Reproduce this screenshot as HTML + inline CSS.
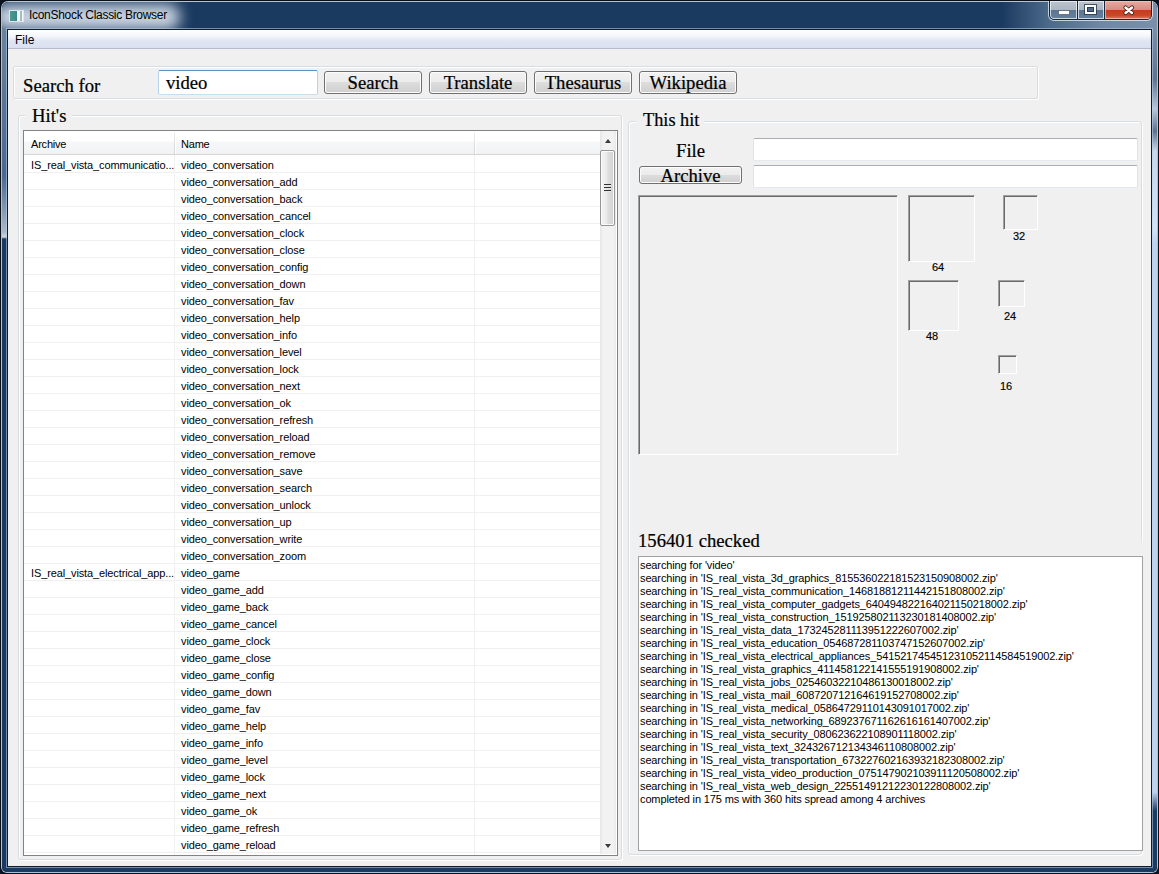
<!DOCTYPE html>
<html><head><meta charset="utf-8"><title>IconShock Classic Browser</title>
<style>
html,body{margin:0;padding:0;width:1159px;height:874px;overflow:hidden;background:#0b1420;}
*{box-sizing:border-box;}
.a{position:absolute;}
#win{position:absolute;left:0;top:0;width:1159px;height:874px;border-radius:8px 8px 7px 7px;background:#0a0f18;overflow:hidden;}
#win2{position:absolute;left:1px;top:1px;width:1157px;height:872px;border-radius:7px 7px 6px 6px;background:#1b3a60;border:1px solid #a9c0de;border-top-color:#b4c6d4;overflow:hidden;}
#tbar{position:absolute;left:0;top:0;width:1155px;height:28px;background:linear-gradient(90deg,#1b3a60 0px,#1b3a60 1000px,#4a6888 1045px,#7088a4 1100px,#7a90aa 1155px);}
#glow{position:absolute;left:-8px;top:2px;width:186px;height:26px;border-radius:12px;background:rgba(208,217,229,.97);filter:blur(7px);}
#ttl{position:absolute;left:27px;top:6px;font:12px "Liberation Sans",sans-serif;color:#000;white-space:nowrap;letter-spacing:-0.3px}
#ico{position:absolute;left:7px;top:8px;width:15px;height:12px;background:linear-gradient(90deg,#4b9a8c 0,#3a8a8a 7px,#f4f8f8 7px,#f4f8f8 10px,#a8bcc0 10px,#a8bcc0 12px,#f4f8f8 12px);border:1px solid #dfe6ea;}
#lfr{position:absolute;left:0;top:27px;width:6px;height:845px;background:linear-gradient(180deg,#6a84a0 0px,#5a7494 75px,#4a6890 147px,#a8b8c8 203px,#d0d8e0 208px,#1b3a60 210px,#1b3a60 845px);}
#rfr{position:absolute;left:1150px;top:27px;width:6px;height:845px;background:linear-gradient(180deg,#7890a8 0px,#5c7490 50px,#b8c8da 80px,#5a7290 102px,#c8d8ea 122px,#d0e4f8 200px,#bcd4f0 215px,#bcd4f0 763px,#1b3a60 782px);}
#bfr{position:absolute;left:0;top:865px;width:1155px;height:7px;background:#1b3a60;}
#client{position:absolute;left:6px;top:28px;width:1147px;height:840px;border:1px solid rgba(190,210,235,.55);}
#client2{position:absolute;left:7px;top:29px;width:1145px;height:838px;border:1px solid #101c2c;background:#f0f0f0;}
#menu{position:absolute;left:8px;top:30px;width:1143px;height:19px;background:linear-gradient(180deg,#ffffff 0%,#f4f6fb 35%,#dfe5f2 60%,#d9e0f1 100%);border-bottom:1px solid #b6bccc;}
#mfile{position:absolute;left:15px;top:33px;font:12px "Liberation Sans",sans-serif;color:#000;}
/* caption buttons */
#cap{position:absolute;left:1048px;top:1px;width:105px;height:20px;border:1px solid rgba(225,235,245,.8);border-top:none;border-radius:0 0 6px 6px;overflow:hidden;}
#cap2{position:absolute;left:0;top:0;width:103px;height:19px;border:1px solid #1a2638;border-top:none;border-radius:0 0 5px 5px;overflow:hidden;background:#1a2638;}
#bmin{position:absolute;left:0;top:0;width:27px;height:18px;background:linear-gradient(180deg,#bcc4ce 0,#a9b5c2 50%,#5c7593 52%,#6580a0 100%);box-shadow:inset 0 0 0 1px rgba(240,245,250,.75);border-bottom-left-radius:4px;}
#bmax{position:absolute;left:28px;top:0;width:26px;height:18px;background:linear-gradient(180deg,#bcc4ce 0,#a9b5c2 50%,#5c7593 52%,#6580a0 100%);box-shadow:inset 0 0 0 1px rgba(240,245,250,.75);}
#bcls{position:absolute;left:55px;top:0;width:48px;height:18px;background:linear-gradient(180deg,#e6aba2 0,#d88a7e 50%,#c63a1e 52%,#d04428 80%,#e07a66 100%);box-shadow:inset 0 0 0 1px rgba(250,200,190,.7);border-bottom-right-radius:4px;}
.serif{font-family:"Liberation Serif",serif;color:#000;white-space:nowrap;-webkit-text-stroke:0.22px #000;}
.sans{font-family:"Liberation Sans",sans-serif;color:#000;white-space:nowrap;}
.grp{position:absolute;border:1px solid #d8dde2;border-radius:3px;box-shadow:inset 1px 1px 0 #fff, 1px 1px 0 #fff;}
.btn{position:absolute;border:1px solid #707070;border-radius:3px;background:linear-gradient(180deg,#f2f2f2 0%,#ebebeb 50%,#dddddd 50%,#cfcfcf 100%);box-shadow:inset 0 0 0 1px #fcfcfc;text-align:center;font-family:"Liberation Serif",serif;color:#000;white-space:nowrap;-webkit-text-stroke:0.22px #000;}
.tb{position:absolute;background:#fff;border:1px solid;border-color:#abadb3 #e2e3ea #e3e9ef #e2e3ea;border-radius:2px;}
.sunk{position:absolute;border:1px solid;border-color:#a0a0a0 #fff #fff #a0a0a0;box-shadow:inset 1px 1px 0 #696969;}
#tbl{position:absolute;left:23px;top:130px;width:595px;height:726px;border:1px solid #838383;background:#fff;overflow:hidden;}
#hdr{position:absolute;left:0;top:0;width:577px;height:24px;background:linear-gradient(180deg,#ffffff 0%,#ffffff 42%,#f6f7f9 50%,#f1f2f4 100%);border-bottom:1px solid #d5d5d5;}
.hs{position:absolute;top:1px;width:1px;height:22px;background:linear-gradient(180deg,#f0f0f0 0%,#dcdcdc 60%,#d3d3d3 100%);box-shadow:1px 0 0 #fff;}
.row{position:absolute;left:0;width:577px;height:17px;border-bottom:1px solid #f0f0f0;font:11px "Liberation Sans",sans-serif;letter-spacing:-0.12px;color:#000;}
.row span{position:absolute;top:3px;white-space:nowrap;}
.c1{left:7px;}
.c2{left:157px;}
.vg{position:absolute;top:24px;width:1px;height:700px;background:#f0f0f0;}
#sb{position:absolute;left:576px;top:0;width:16px;height:723px;background:linear-gradient(90deg,#e6e6e6 0,#f2f2f2 20%,#f2f2f2 80%,#e9e9e9 100%);}
#thumb{position:absolute;left:0px;top:19px;width:15px;height:76px;border:1px solid #959595;border-radius:2px;background:linear-gradient(90deg,#f4f4f4 0,#ececec 40%,#dedede 55%,#d2d2d2 100%);box-shadow:inset 0 0 0 1px #fbfbfb;}
.grip{position:absolute;left:3px;width:7px;height:2px;background:linear-gradient(180deg,#303030 50%,#e8e8e8 50%);}
.arr{position:absolute;width:0;height:0;border-left:4px solid transparent;border-right:4px solid transparent;}
#log{position:absolute;left:638px;top:556px;width:505px;height:295px;border:1px solid #a2a2a2;background:#fff;overflow:hidden;}
.ll{font:11px/13px "Liberation Sans",sans-serif;letter-spacing:-0.125px;color:#000;white-space:nowrap;}
.lbl{position:absolute;font:11px "Liberation Sans",sans-serif;color:#000;-webkit-text-stroke:0.15px #000;}

</style></head><body>
<div id="win"><div id="win2">
 <div id="tbar"><div id="glow"></div><div id="ico"></div><div id="ttl">IconShock Classic Browser</div></div>
 <div id="lfr"></div><div id="rfr"></div><div id="bfr"></div>
</div></div>
<div id="cap"><div id="cap2">
  <div id="bmin"><div class="a" style="left:8px;top:9px;width:12px;height:5px;background:#fff;border:1px solid rgba(40,55,75,.7);"></div></div>
  <div id="bmax"><div class="a" style="left:7px;top:4px;width:11px;height:9px;border:2px solid #fff;outline:1px solid rgba(40,55,75,.8);box-shadow:inset 0 0 0 1px #2a3a50;background:#50688a;"></div></div>
  <div id="bcls"><svg class="a" style="left:0;top:0" width="48" height="18"><path d="M20.5 6.5 L27 12 M27 6.5 L20.5 12" stroke="#4a2018" stroke-width="4.2" stroke-linecap="round"/><path d="M20.5 6.5 L27 12 M27 6.5 L20.5 12" stroke="#fff" stroke-width="2.4" stroke-linecap="round"/></svg></div>
</div></div>
<div id="client"></div><div id="client2"></div>
<div id="menu"></div>
<div id="mfile">File</div>

<!-- search group -->
<div class="grp" style="left:13px;top:66px;width:1025px;height:33px;border-radius:2px;"></div>
<div class="a serif" style="left:23px;top:75px;font-size:18.67px;">Search for</div>
<div class="tb" style="left:158px;top:70px;width:160px;height:25px;border-color:#5d8fc5 #b7d3ea #c5def0 #b7d3ea;"></div>
<div class="a serif" style="left:166px;top:72px;font-size:18.67px;">video</div>
<div class="btn" style="left:324px;top:71px;width:98px;height:23px;font-size:18.67px;line-height:20px;padding-top:1px;">Search</div>
<div class="btn" style="left:429px;top:71px;width:98px;height:23px;font-size:18.67px;line-height:20px;padding-top:1px;">Translate</div>
<div class="btn" style="left:534px;top:71px;width:98px;height:23px;font-size:18.67px;line-height:20px;padding-top:1px;">Thesaurus</div>
<div class="btn" style="left:639px;top:71px;width:98px;height:23px;font-size:18.67px;line-height:20px;padding-top:1px;">Wikipedia</div>

<!-- hits group -->
<div class="grp" style="left:18px;top:115px;width:604px;height:745px;"></div>
<div class="a serif" style="left:25px;top:105px;font-size:18.67px;background:#f0f0f0;padding:0 6px 0 7px;">Hit's</div>
<div id="tbl">
  <div id="hdr">
    <div class="a sans" style="left:7px;top:7px;font-size:11px;letter-spacing:-0.2px;">Archive</div>
    <div class="a sans" style="left:157px;top:7px;font-size:11px;letter-spacing:-0.2px;">Name</div>
    <div class="hs" style="left:150px"></div>
    <div class="hs" style="left:450px"></div>
  </div>
  <div class="vg" style="left:150px"></div>
  <div class="vg" style="left:450px"></div>
<div class="row" style="top:25px"><span class="c1">IS_real_vista_communicatio...</span><span class="c2">video_conversation</span></div>
<div class="row" style="top:42px"><span class="c1"></span><span class="c2">video_conversation_add</span></div>
<div class="row" style="top:59px"><span class="c1"></span><span class="c2">video_conversation_back</span></div>
<div class="row" style="top:76px"><span class="c1"></span><span class="c2">video_conversation_cancel</span></div>
<div class="row" style="top:93px"><span class="c1"></span><span class="c2">video_conversation_clock</span></div>
<div class="row" style="top:110px"><span class="c1"></span><span class="c2">video_conversation_close</span></div>
<div class="row" style="top:127px"><span class="c1"></span><span class="c2">video_conversation_config</span></div>
<div class="row" style="top:144px"><span class="c1"></span><span class="c2">video_conversation_down</span></div>
<div class="row" style="top:161px"><span class="c1"></span><span class="c2">video_conversation_fav</span></div>
<div class="row" style="top:178px"><span class="c1"></span><span class="c2">video_conversation_help</span></div>
<div class="row" style="top:195px"><span class="c1"></span><span class="c2">video_conversation_info</span></div>
<div class="row" style="top:212px"><span class="c1"></span><span class="c2">video_conversation_level</span></div>
<div class="row" style="top:229px"><span class="c1"></span><span class="c2">video_conversation_lock</span></div>
<div class="row" style="top:246px"><span class="c1"></span><span class="c2">video_conversation_next</span></div>
<div class="row" style="top:263px"><span class="c1"></span><span class="c2">video_conversation_ok</span></div>
<div class="row" style="top:280px"><span class="c1"></span><span class="c2">video_conversation_refresh</span></div>
<div class="row" style="top:297px"><span class="c1"></span><span class="c2">video_conversation_reload</span></div>
<div class="row" style="top:314px"><span class="c1"></span><span class="c2">video_conversation_remove</span></div>
<div class="row" style="top:331px"><span class="c1"></span><span class="c2">video_conversation_save</span></div>
<div class="row" style="top:348px"><span class="c1"></span><span class="c2">video_conversation_search</span></div>
<div class="row" style="top:365px"><span class="c1"></span><span class="c2">video_conversation_unlock</span></div>
<div class="row" style="top:382px"><span class="c1"></span><span class="c2">video_conversation_up</span></div>
<div class="row" style="top:399px"><span class="c1"></span><span class="c2">video_conversation_write</span></div>
<div class="row" style="top:416px"><span class="c1"></span><span class="c2">video_conversation_zoom</span></div>
<div class="row" style="top:433px"><span class="c1">IS_real_vista_electrical_app...</span><span class="c2">video_game</span></div>
<div class="row" style="top:450px"><span class="c1"></span><span class="c2">video_game_add</span></div>
<div class="row" style="top:467px"><span class="c1"></span><span class="c2">video_game_back</span></div>
<div class="row" style="top:484px"><span class="c1"></span><span class="c2">video_game_cancel</span></div>
<div class="row" style="top:501px"><span class="c1"></span><span class="c2">video_game_clock</span></div>
<div class="row" style="top:518px"><span class="c1"></span><span class="c2">video_game_close</span></div>
<div class="row" style="top:535px"><span class="c1"></span><span class="c2">video_game_config</span></div>
<div class="row" style="top:552px"><span class="c1"></span><span class="c2">video_game_down</span></div>
<div class="row" style="top:569px"><span class="c1"></span><span class="c2">video_game_fav</span></div>
<div class="row" style="top:586px"><span class="c1"></span><span class="c2">video_game_help</span></div>
<div class="row" style="top:603px"><span class="c1"></span><span class="c2">video_game_info</span></div>
<div class="row" style="top:620px"><span class="c1"></span><span class="c2">video_game_level</span></div>
<div class="row" style="top:637px"><span class="c1"></span><span class="c2">video_game_lock</span></div>
<div class="row" style="top:654px"><span class="c1"></span><span class="c2">video_game_next</span></div>
<div class="row" style="top:671px"><span class="c1"></span><span class="c2">video_game_ok</span></div>
<div class="row" style="top:688px"><span class="c1"></span><span class="c2">video_game_refresh</span></div>
<div class="row" style="top:705px"><span class="c1"></span><span class="c2">video_game_reload</span></div>
  <div id="sb">
    <div class="arr" style="left:5px;top:8px;border-left-width:3.5px;border-right-width:3.5px;border-bottom:4px solid #3a3a3a;"></div>
    <div id="thumb">
      <div class="grip" style="top:33px"></div>
      <div class="grip" style="top:36px"></div>
      <div class="grip" style="top:39px"></div>
    </div>
    <div class="arr" style="left:5px;top:713px;border-left-width:3.5px;border-right-width:3.5px;border-top:4px solid #3a3a3a;"></div>
  </div>
</div>

<!-- this hit group -->
<div class="grp" style="left:628px;top:121px;width:514px;height:734px;"></div>
<div class="a serif" style="left:636px;top:110px;font-size:18.3px;background:#f0f0f0;padding:0 5px 0 7px;">This hit</div>
<div class="a serif" style="left:676px;top:140px;font-size:18.67px;">File</div>
<div class="btn" style="left:639px;top:166px;width:103px;height:18px;font-size:18.67px;line-height:15px;padding-top:1px;">Archive</div>
<div class="tb" style="left:753px;top:138px;width:385px;height:23px;"></div>
<div class="tb" style="left:753px;top:165px;width:385px;height:23px;"></div>
<div class="sunk" style="left:638px;top:195px;width:260px;height:260px;"></div>
<div class="sunk" style="left:908px;top:195px;width:67px;height:67px;"></div>
<div class="lbl" style="left:932px;top:261px;">64</div>
<div class="sunk" style="left:1003px;top:195px;width:35px;height:35px;"></div>
<div class="lbl" style="left:1013px;top:230px;">32</div>
<div class="sunk" style="left:908px;top:280px;width:51px;height:51px;"></div>
<div class="lbl" style="left:926px;top:330px;">48</div>
<div class="sunk" style="left:998px;top:280px;width:27px;height:27px;"></div>
<div class="lbl" style="left:1004px;top:310px;">24</div>
<div class="sunk" style="left:998px;top:355px;width:19px;height:19px;"></div>
<div class="lbl" style="left:1000px;top:380px;">16</div>
<div class="a serif" style="left:638px;top:530px;font-size:18.67px;background:#f0f0f0;padding-right:4px;">156401 checked</div>
<div class="a" style="left:1139px;top:535px;width:4px;height:21px;background:linear-gradient(180deg,rgba(240,240,240,0),#f0f0f0 60%);"></div>
<div id="log"><div style="position:absolute;left:1px;top:2px;">
<div class="ll">searching for &#x27;video&#x27;</div>
<div class="ll">searching in &#x27;IS_real_vista_3d_graphics_815536022181523150908002.zip&#x27;</div>
<div class="ll">searching in &#x27;IS_real_vista_communication_14681881211442151808002.zip&#x27;</div>
<div class="ll">searching in &#x27;IS_real_vista_computer_gadgets_640494822164021150218002.zip&#x27;</div>
<div class="ll">searching in &#x27;IS_real_vista_construction_151925802113230181408002.zip&#x27;</div>
<div class="ll">searching in &#x27;IS_real_vista_data_173245281113951222607002.zip&#x27;</div>
<div class="ll">searching in &#x27;IS_real_vista_education_054687281103747152607002.zip&#x27;</div>
<div class="ll">searching in &#x27;IS_real_vista_electrical_appliances_541521745451231052114584519002.zip&#x27;</div>
<div class="ll">searching in &#x27;IS_real_vista_graphics_411458122141555191908002.zip&#x27;</div>
<div class="ll">searching in &#x27;IS_real_vista_jobs_02546032210486130018002.zip&#x27;</div>
<div class="ll">searching in &#x27;IS_real_vista_mail_608720712164619152708002.zip&#x27;</div>
<div class="ll">searching in &#x27;IS_real_vista_medical_05864729110143091017002.zip&#x27;</div>
<div class="ll">searching in &#x27;IS_real_vista_networking_689237671162616161407002.zip&#x27;</div>
<div class="ll">searching in &#x27;IS_real_vista_security_080623622108901118002.zip&#x27;</div>
<div class="ll">searching in &#x27;IS_real_vista_text_324326712134346110808002.zip&#x27;</div>
<div class="ll">searching in &#x27;IS_real_vista_transportation_673227602163932182308002.zip&#x27;</div>
<div class="ll">searching in &#x27;IS_real_vista_video_production_075147902103911120508002.zip&#x27;</div>
<div class="ll">searching in &#x27;IS_real_vista_web_design_22551491212230122808002.zip&#x27;</div>
<div class="ll">completed in 175 ms with 360 hits spread among 4 archives</div>
</div></div>

</body></html>
